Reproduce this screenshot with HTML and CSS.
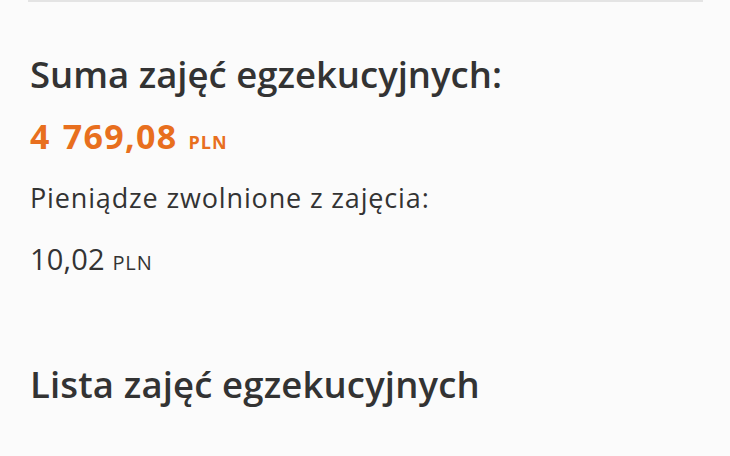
FILE: index.html
```html
<!DOCTYPE html>
<html lang="pl">
<head>
<meta charset="utf-8">
<link rel="stylesheet" href="styles.css">
</head>
<body>
<div class="page">
  <div class="divider"></div>
  <section class="summary">
    <h2 class="title">Suma zajęć egzekucyjnych:</h2>
    <div class="amount"><span class="num">4 769,08</span> <span class="cur">PLN</span></div>
    <div class="label">Pieniądze zwolnione z zajęcia:</div>
    <div class="value"><span class="num">10,02</span> <span class="cur">PLN</span></div>
  </section>
  <h2 class="title list-title">Lista zajęć egzekucyjnych</h2>
</div>
</body>
</html>
```
FILE: styles.css
```css
html, body {
  margin: 0;
  padding: 0;
  background: #fbfbfb;
}
body {
  font-family: "Open Sans", "Noto Sans", sans-serif;
  color: #333333;
  width: 730px;
  height: 456px;
  overflow: hidden;
}
.page {
  display: flex;
  flex-direction: column;
}
.divider {
  height: 2px;
  margin: 0 27px 0 28px;
  background: #e4e4e4;
}
.summary {
  padding: 0 30px;
  display: flex;
  flex-direction: column;
}
.title {
  margin: 0;
  font-size: 36.5px;
  font-weight: 600;
  line-height: 44px;
  color: #333333;
  padding-left: 30px;
}
.summary .title {
  padding-left: 0;
  margin-top: 50px;
}
.amount {
  margin-top: 22px;
  color: #e86f1e;
  font-weight: 700;
  font-size: 34px;
  line-height: 36px;
  word-spacing: 2px;
}
.amount .num { letter-spacing: 1.3px; }
.amount .cur { font-size: 18px; letter-spacing: 1px; }
.label {
  margin-top: 22px;
  font-size: 27px;
  line-height: 32px;
  letter-spacing: 0.85px;
}
.value {
  margin-top: 28px;
  font-size: 29px;
  line-height: 34px;
}
.value .num { letter-spacing: 0.2px; }
.value .cur { font-size: 20px; letter-spacing: 0.9px; }
.list-title {
  margin-top: 82px;
  letter-spacing: 0.15px;
}
```
